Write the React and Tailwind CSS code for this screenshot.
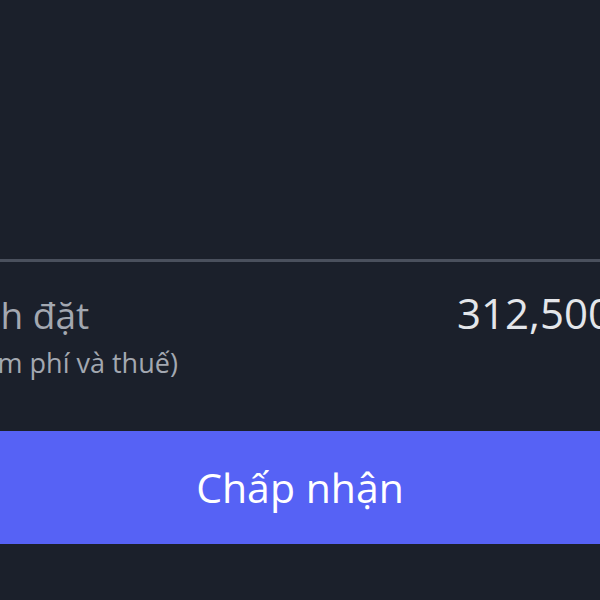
export default function App() {
  return (
    <main
      className="h-[600px] w-[600px] overflow-hidden bg-[#1b202b]"
      style={{ fontFamily: "'Open Sans', 'Noto Sans', sans-serif" }}
    >
      <div className="h-[259px]" />
      <div className="h-[3px] bg-[#4a505d]" />
      <section className="flex items-start justify-between pt-[30px]">
        <div className="-ml-[166px] flex flex-col">
          <span className="text-[37px] leading-[46px] text-[#a3a8b1]">
            Giá trị lệnh đặt
          </span>
          <span className="ml-[69px] mt-[8px] text-[27px] leading-[34px] text-[#a3a8b1]">
            (Bao gồm phí và thuế)
          </span>
        </div>
        <span className="-mr-[12px] -mt-[2px] text-[42px] leading-[46px] text-[#e4e6ea]">
          312,500
        </span>
      </section>
      <div className="h-[51px]" />
      <button
        type="button"
        className="flex h-[113px] w-full items-center justify-center bg-[#5662f5] text-[41px] text-white"
      >
        Chấp nhận
      </button>
    </main>
  );
}
